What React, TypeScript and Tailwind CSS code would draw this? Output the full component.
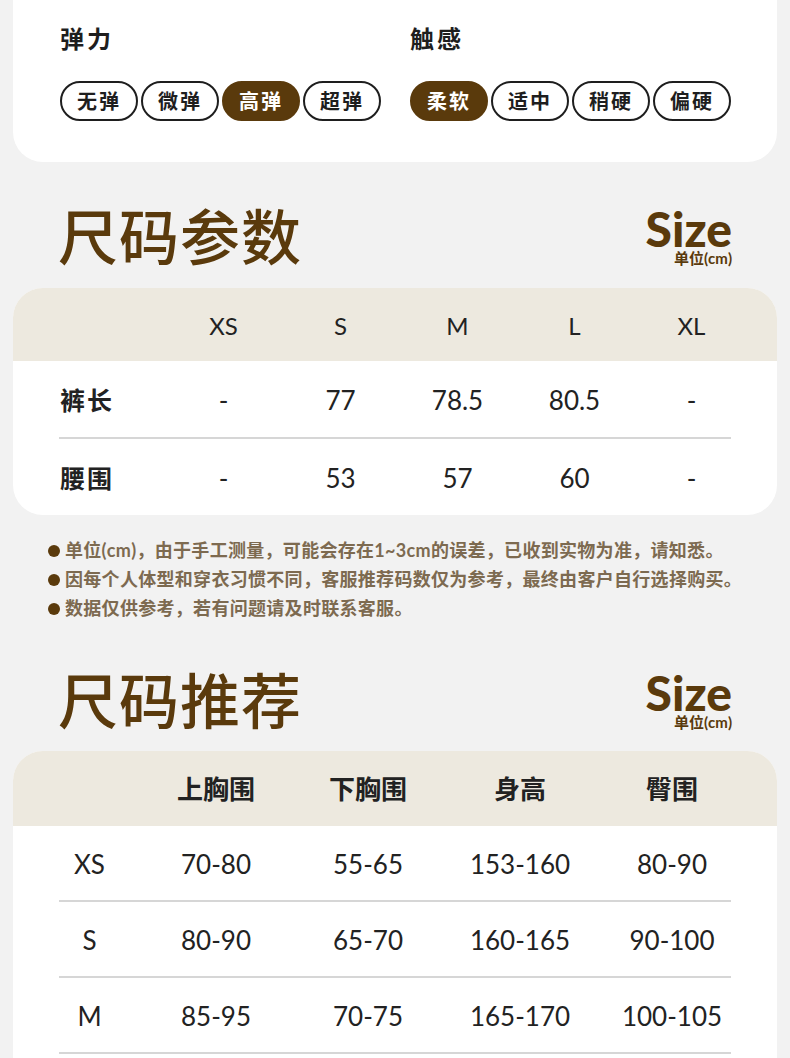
import React from 'react';

const BROWN = 'text-[#5a3a0c]';
const FONT = { fontFamily: 'Lato, "Noto Sans CJK SC", sans-serif' };

function Pill({ label, active }: { label: string; active?: boolean }) {
  return (
    <div
      className={
        active
          ? 'h-[40px] w-[78px] rounded-full bg-[#5a3a0c] border-2 border-[#5a3a0c] text-white flex items-center justify-center text-[20px] font-bold tracking-[2px]'
          : 'h-[40px] w-[78px] rounded-full border-2 border-[#1e1e1e] text-[#1e1e1e] flex items-center justify-center text-[20px] font-bold tracking-[2px]'
      }
    >
      {label}
    </div>
  );
}

function Attr({ title, items, active }: { title: string; items: string[]; active: number }) {
  return (
    <div>
      <div className="text-[24px] leading-none font-bold text-[#1e1e1e] tracking-[3px]">{title}</div>
      <div className="flex gap-[3px] mt-[30px]">
        {items.map((it, i) => (
          <Pill key={it} label={it} active={i === active} />
        ))}
      </div>
    </div>
  );
}

function Heading({ title }: { title: string }) {
  return (
    <div className="flex justify-between items-start px-[58px]">
      <div className={`${BROWN} text-[60px] leading-none font-medium mt-[2px] tracking-[1px]`}>{title}</div>
      <div className="flex flex-col items-end mt-[3px]">
        <div className={`${BROWN} text-[48px] leading-[42px] font-black`}>Size</div>
        <div className={`${BROWN} text-[15px] leading-none font-bold mt-[1px]`}>单位(cm)</div>
      </div>
    </div>
  );
}

const params = [
  { name: '裤长', vals: ['-', '77', '78.5', '80.5', '-'] },
  { name: '腰围', vals: ['-', '53', '57', '60', '-'] },
];

const recs = [
  { size: 'XS', vals: ['70-80', '55-65', '153-160', '80-90'] },
  { size: 'S', vals: ['80-90', '65-70', '160-165', '90-100'] },
  { size: 'M', vals: ['85-95', '70-75', '165-170', '100-105'] },
];

const notes = [
  '单位(cm)，由于手工测量，可能会存在1~3cm的误差，已收到实物为准，请知悉。',
  '因每个人体型和穿衣习惯不同，客服推荐码数仅为参考，最终由客户自行选择购买。',
  '数据仅供参考，若有问题请及时联系客服。',
];

export default function App() {
  return (
    <div className="w-[790px] min-h-[1058px] bg-[#f2f2f2] overflow-hidden" style={FONT}>
      {/* attributes card */}
      <div className="mx-[13px] bg-white rounded-b-[30px] pt-[27px] pb-[41px] pl-[47px] flex gap-[29px]">
        <Attr title="弹力" items={['无弹', '微弹', '高弹', '超弹']} active={2} />
        <Attr title="触感" items={['柔软', '适中', '稍硬', '偏硬']} active={0} />
      </div>

      <div className="pt-[43px]">
        <Heading title="尺码参数" />
      </div>

      {/* size params */}
      <div className="mx-[13px] mt-[21px] bg-white rounded-[30px] overflow-hidden text-[#222]">
        <div className="h-[73px] pt-[3px] bg-[#ede9df] grid grid-cols-[105px_117px_117px_117px_117px_117px] pl-[47px] items-center text-[24px]">
          <div />
          {['XS', 'S', 'M', 'L', 'XL'].map(s => (
            <div key={s} className="text-center">{s}</div>
          ))}
        </div>
        {params.map((r, i) => (
          <div key={r.name}>
            {i > 0 && <div className="mx-[46px] h-[2px] bg-[#d6d6d6]" />}
            <div className="h-[76px] pt-[3px] grid grid-cols-[105px_117px_117px_117px_117px_117px] pl-[47px] items-center">
              <div className="text-[25px] font-bold tracking-[2px]">{r.name}</div>
              {r.vals.map((v, j) => (
                <div key={j} className="text-center text-[26px]">{v}</div>
              ))}
            </div>
          </div>
        ))}
      </div>

      {/* notes */}
      <div className="mt-[21px] pl-[48px] flex flex-col">
        {notes.map(n => (
          <div key={n} className="h-[29px] flex items-center gap-[5px]">
            <span className="w-[12px] h-[12px] rounded-full bg-[#5a3a0c] shrink-0" />
            <span className="text-[18px] font-bold text-[#7d6a50] whitespace-nowrap tracking-[0.3px]">{n}</span>
          </div>
        ))}
      </div>

      <div className="pt-[46px]">
        <Heading title="尺码推荐" />
      </div>

      {/* recommendations */}
      <div className="mx-[13px] mt-[20px] bg-white rounded-t-[30px] overflow-hidden text-[#222] pb-[40px]">
        <div className="h-[75px] pt-[2px] bg-[#ede9df] grid grid-cols-[101px_152px_152px_152px_152px] pl-[26px] items-center text-[26px] font-bold">
          <div />
          {['上胸围', '下胸围', '身高', '臀围'].map(s => (
            <div key={s} className="text-center">{s}</div>
          ))}
        </div>
        {recs.map(r => (
          <div key={r.size}>
            <div className="h-[74px] pt-[2px] grid grid-cols-[101px_152px_152px_152px_152px] pl-[26px] items-center text-[26px]">
              <div className="text-center">{r.size}</div>
              {r.vals.map((v, j) => (
                <div key={j} className="text-center">{v}</div>
              ))}
            </div>
            <div className="mx-[46px] h-[2px] bg-[#d6d6d6]" />
          </div>
        ))}
      </div>
    </div>
  );
}
